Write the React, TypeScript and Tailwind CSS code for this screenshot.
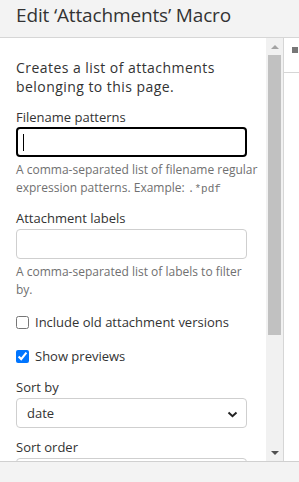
import React from "react";

const HelpText = ({ children }: { children: React.ReactNode }) => (
  <div className="mt-[4px] text-[12px] leading-[18px] text-[#707070]">{children}</div>
);

const Label = ({ children }: { children: React.ReactNode }) => (
  <div className="text-[13px] leading-[19px] text-[#333]">{children}</div>
);

const Chevron = () => (
  <svg width="11" height="7" viewBox="0 0 11 7" className="absolute right-[8px] top-[12px]">
    <path d="M1.5 1.5 L5.5 5.2 L9.5 1.5" fill="none" stroke="#222" strokeWidth="2" />
  </svg>
);

const FakeSelect = ({ value }: { value: string }) => (
  <div className="relative mt-[1px] h-[30px] w-[231px] rounded-[4px] border border-[#cfcfcf] bg-white pl-[10px] text-[13px] leading-[28px] text-[#333]">
    {value}
    {value && <Chevron />}
  </div>
);

export default function App() {
  return (
    <div
      className="flex h-[482px] w-[299px] flex-col overflow-hidden bg-[#f3f3f3]"
      style={{ fontFamily: '"Open Sans", "Noto Sans", sans-serif' }}
    >
      {/* header */}
      <div className="h-[38px] shrink-0 border-b border-[#d6d6d6] pl-[16px] pt-[2px] text-[19px] leading-[26px] tracking-[-0.15px] text-[#333]">
        Edit ‘Attachments’ Macro
      </div>

      {/* body */}
      <div className="flex h-[423px] shrink-0 bg-white">
        <div className="w-[266px] shrink-0 overflow-hidden pl-[16px] pt-[20px]">
          <div className="text-[14px] leading-[19px] tracking-[0.45px] text-[#333]">
            Creates a list of attachments
            <br />
            belonging to this page.
          </div>

          <div className="mt-[12px]">
            <Label>Filename patterns</Label>
            <div className="flex h-[30px] w-[231px] items-center rounded-[4px] border-2 border-black pl-[5px]">
              <div className="h-[17px] w-[1px] bg-black" />
            </div>
            <HelpText>
              A comma-separated list of filename regular
              <br />
              expression patterns. Example: <span className="font-['Liberation_Mono',monospace] text-[11px]">.*pdf</span>
            </HelpText>
          </div>

          <div className="mt-[11px]">
            <Label>Attachment labels</Label>
            <div className="mt-[1px] h-[30px] w-[231px] rounded-[4px] border border-[#cfcfcf]" />
            <HelpText>
              A comma-separated list of labels to filter
              <br />
              by.
            </HelpText>
          </div>

          <label className="mt-[14px] flex items-center gap-[6px] text-[13px] leading-[19px] text-[#333]">
            <input type="checkbox" className="m-0 h-[13px] w-[13px]" />
            Include old attachment versions
          </label>

          <label className="mt-[15px] flex items-center gap-[6px] text-[13px] leading-[19px] text-[#333]">
            <input type="checkbox" defaultChecked className="m-0 h-[13px] w-[13px]" />
            Show previews
          </label>

          <div className="mt-[12px]">
            <Label>Sort by</Label>
            <FakeSelect value="date" />
          </div>

          <div className="mt-[10px]">
            <Label>Sort order</Label>
            <FakeSelect value="" />
          </div>
        </div>

        {/* scrollbar */}
        <div className="flex w-[17px] shrink-0 flex-col items-center bg-[#f1f1f1]">
          <div className="flex h-[17px] w-full items-center justify-center">
            <div className="h-0 w-0 border-x-[4px] border-b-[4px] border-x-transparent border-b-[#a3a3a3]" />
          </div>
          <div className="h-[280px] w-[13px] bg-[#c1c1c1]" />
          <div className="flex-1" />
          <div className="flex h-[17px] w-full items-center justify-center">
            <div className="h-0 w-0 border-x-[4px] border-t-[4px] border-x-transparent border-t-[#505050]" />
          </div>
        </div>

        {/* right pane */}
        <div className="flex-1 border-l border-[#d6d6d6]">
          <div className="h-[35px] border-b border-[#d6d6d6] pl-[8px] pt-[9px]">
            <div className="h-[6px] w-[6px] bg-[#777]" />
          </div>
        </div>
      </div>

      {/* footer */}
      <div className="flex-1 border-t border-[#d0d0d0]" />
    </div>
  );
}
